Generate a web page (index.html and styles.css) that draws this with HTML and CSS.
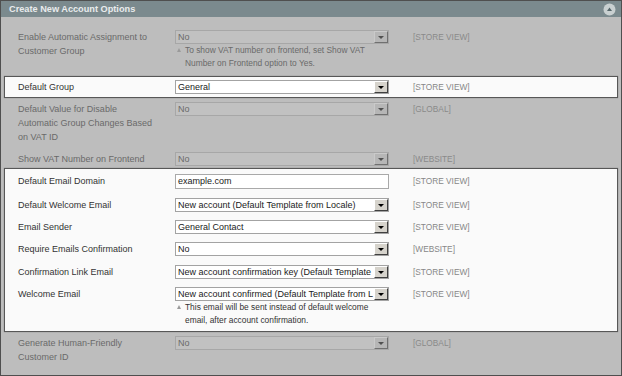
FILE: index.html
```html
<!DOCTYPE html>
<html>
<head>
<meta charset="utf-8">
<link rel="stylesheet" href="styles.css">
</head>
<body>
<div class="panel">
  <div class="head">
    <span class="title">Create New Account Options</span>
    <span class="collapse">
      <svg width="13" height="13" viewBox="0 0 13 13"><circle cx="6.5" cy="6.5" r="6" fill="#c9d0d1"/><path d="M4 8 L6.5 4.5 L9 8 Z" fill="#56666a"/></svg>
    </span>
  </div>
  <div class="body">
    <div class="group dim">
      <div class="row r-a">
        <div class="label">Enable Automatic Assignment to<br>Customer Group</div>
        <div class="value">
          <div class="select"><span class="sel-text">No</span><span class="btn"><i class="tri"></i></span></div>
          <div class="note">To show VAT number on frontend, set Show VAT<br>Number on Frontend option to Yes.</div>
        </div>
        <div class="scope">[STORE VIEW]</div>
      </div>
    </div>
    <div class="group hl g-b">
      <div class="row r-b">
        <div class="label">Default Group</div>
        <div class="value">
          <div class="select"><span class="sel-text">General</span><span class="btn"><i class="tri"></i></span></div>
        </div>
        <div class="scope">[STORE VIEW]</div>
      </div>
    </div>
    <div class="group dim">
      <div class="row r-c">
        <div class="label">Default Value for Disable<br>Automatic Group Changes Based<br>on VAT ID</div>
        <div class="value">
          <div class="select"><span class="sel-text">No</span><span class="btn"><i class="tri"></i></span></div>
        </div>
        <div class="scope">[GLOBAL]</div>
      </div>
      <div class="row r-d">
        <div class="label">Show VAT Number on Frontend</div>
        <div class="value">
          <div class="select"><span class="sel-text">No</span><span class="btn"><i class="tri"></i></span></div>
        </div>
        <div class="scope">[WEBSITE]</div>
      </div>
    </div>
    <div class="group hl g-d">
      <div class="row">
        <div class="label">Default Email Domain</div>
        <div class="value">
          <div class="input">example.com</div>
        </div>
        <div class="scope">[STORE VIEW]</div>
      </div>
      <div class="row extra">
        <div class="label">Default Welcome Email</div>
        <div class="value">
          <div class="select"><span class="sel-text">New account (Default Template from Locale)</span><span class="btn"><i class="tri"></i></span></div>
        </div>
        <div class="scope">[STORE VIEW]</div>
      </div>
      <div class="row">
        <div class="label">Email Sender</div>
        <div class="value">
          <div class="select"><span class="sel-text">General Contact</span><span class="btn"><i class="tri"></i></span></div>
        </div>
        <div class="scope">[STORE VIEW]</div>
      </div>
      <div class="row">
        <div class="label">Require Emails Confirmation</div>
        <div class="value">
          <div class="select"><span class="sel-text">No</span><span class="btn"><i class="tri"></i></span></div>
        </div>
        <div class="scope">[WEBSITE]</div>
      </div>
      <div class="row extra">
        <div class="label">Confirmation Link Email</div>
        <div class="value">
          <div class="select"><span class="sel-text">New account confirmation key (Default Template</span><span class="btn"><i class="tri"></i></span></div>
        </div>
        <div class="scope">[STORE VIEW]</div>
      </div>
      <div class="row">
        <div class="label">Welcome Email</div>
        <div class="value">
          <div class="select"><span class="sel-text">New account confirmed (Default Template from L</span><span class="btn"><i class="tri"></i></span></div>
          <div class="note">This email will be sent instead of default welcome<br>email, after account confirmation.</div>
        </div>
        <div class="scope">[STORE VIEW]</div>
      </div>
    </div>
    <div class="group dim">
      <div class="row r-e">
        <div class="label">Generate Human-Friendly<br>Customer ID</div>
        <div class="value">
          <div class="select"><span class="sel-text">No</span><span class="btn"><i class="tri"></i></span></div>
        </div>
        <div class="scope">[GLOBAL]</div>
      </div>
    </div>
  </div>
</div>
</body>
</html>
```

FILE: styles.css
```css
* { box-sizing: border-box; }
html, body { margin: 0; padding: 0; }
body {
  width: 622px;
  height: 376px;
  overflow: hidden;
  font-family: "Liberation Sans", Arial, sans-serif;
  background: #bdbdbd;
}
.panel {
  width: 622px;
  height: 376px;
  border: 1px solid #4f4f4f;
  background: #bdbdbd;
  overflow: hidden;
}
.head {
  height: 16px;
  background: #7b8a8e;
  display: flex;
  align-items: center;
  justify-content: space-between;
  padding: 0 5px 0 8px;
}
.title {
  color: #e9eced;
  font-weight: bold;
  font-size: 9.2px;
  line-height: 16px;
}
.collapse { display: flex; align-items: center; }
.collapse svg { display: block; }
.body {
  padding: 8px 3px 0 3px;
}
.group {
  border: 1px solid transparent;
}
.group.hl {
  background: #fafafa;
  border-color: #575757;
  box-shadow: 0 0 1px rgba(0,0,0,0.35);
}
.g-b { margin-top: 1px; }
.g-d { padding: 1px 0 0 0; }
.row {
  display: grid;
  grid-template-columns: 157px 214px 24px 1fr;
  padding: 4px 0 4px 13px;
  align-items: start;
}
.row.extra { padding-top: 5px; }
.r-b { padding: 3px 0 3px 13px; }
.r-c { padding: 3px 0 4px 13px; }
.r-d { padding: 4px 0 1px 13px; }
.r-e { padding: 3px 0 4px 13px; }
.label {
  font-size: 9px;
  line-height: 14px;
  color: #6a6a6a;
}
.hl .label { color: #333333; }
.select {
  height: 14px;
  display: flex;
  align-items: stretch;
  border: 1px solid #a7a7a7;
  background: #c1c1c1;
  overflow: hidden;
}
.hl .select {
  border-color: #a3a3a3;
  background: #ffffff;
}
.sel-text {
  flex: 1;
  min-width: 0;
  white-space: nowrap;
  overflow: hidden;
  font-size: 9px;
  line-height: 12px;
  padding-left: 2px;
  color: #6a6a6a;
}
.hl .sel-text { color: #1a1a1a; }
.btn {
  width: 14px;
  flex: none;
  background: #b6b6b6;
  border-top: 1px solid #cacaca;
  border-left: 1px solid #cacaca;
  border-right: 1px solid #707070;
  border-bottom: 1px solid #707070;
  display: flex;
  align-items: center;
  justify-content: center;
}
.hl .btn {
  background: #d6d3cc;
  border-top-color: #ffffff;
  border-left-color: #ffffff;
  border-right-color: #404040;
  border-bottom-color: #404040;
}
.tri {
  width: 0;
  height: 0;
  border-left: 3px solid transparent;
  border-right: 3px solid transparent;
  border-top: 3px solid #505050;
}
.hl .tri { border-top-color: #000000; }
.input {
  height: 15px;
  border: 1px solid #a9a9a9;
  background: #ffffff;
  font-size: 9px;
  line-height: 13px;
  padding-left: 2px;
  color: #1a1a1a;
}
.note {
  position: relative;
  font-size: 8.4px;
  line-height: 13px;
  padding-left: 10px;
  color: #6a6a6a;
}
.hl .note { color: #333333; }
.note::before {
  content: "";
  position: absolute;
  left: 2px;
  top: 4px;
  width: 0;
  height: 0;
  border-left: 2.5px solid transparent;
  border-right: 2.5px solid transparent;
  border-bottom: 4px solid #9a9a9a;
}
.scope {
  grid-column: 4;
  font-size: 8.3px;
  line-height: 14px;
  color: #8a8a8a;
  white-space: nowrap;
}
.hl .scope { color: #878787; }
```
